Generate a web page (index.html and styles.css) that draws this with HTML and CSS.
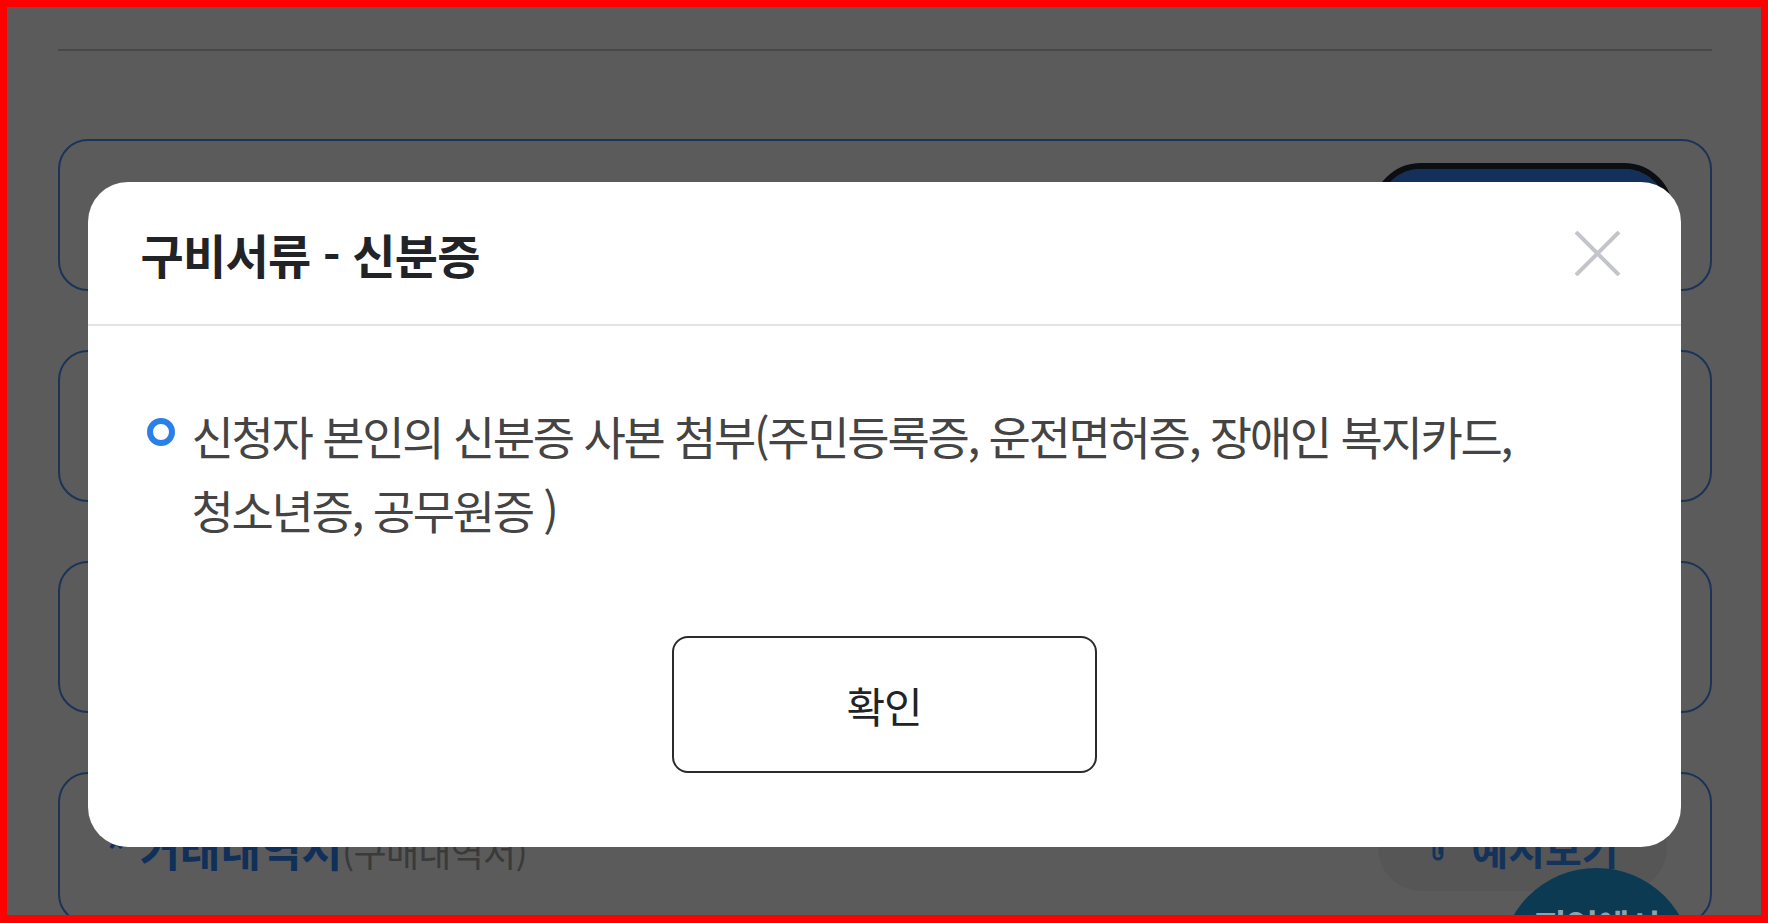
FILE: index.html
```html
<!DOCTYPE html>
<html lang="ko">
<head>
<meta charset="utf-8">
<title>구비서류 - 신분증</title>
<link rel="stylesheet" href="styles.css">
</head>
<body>
<div class="page">
  <div class="topline"></div>
  <ul class="docs">
    <li class="doc">
      <p class="doc-name"><b>* 신분증</b><span>(신분증 사본)</span></p>
      <button class="sample is-active">
        <svg class="clip" viewBox="0 0 20 32" width="20" height="32"><path d="M14 9 V23 a4 4 0 0 1 -8 0 V6 a3 3 0 0 1 6 0 V21" fill="none" stroke="currentColor" stroke-width="3" stroke-linecap="round"/></svg>
        <span>예시보기</span>
      </button>
    </li>
    <li class="doc">
      <p class="doc-name"><b>* 통장사본</b><span>(본인 명의)</span></p>
      <button class="sample">
        <svg class="clip" viewBox="0 0 20 32" width="20" height="32"><path d="M14 9 V23 a4 4 0 0 1 -8 0 V6 a3 3 0 0 1 6 0 V21" fill="none" stroke="currentColor" stroke-width="3" stroke-linecap="round"/></svg>
        <span>예시보기</span>
      </button>
    </li>
    <li class="doc">
      <p class="doc-name"><b>* 사업자등록증</b><span>(사본)</span></p>
      <button class="sample">
        <svg class="clip" viewBox="0 0 20 32" width="20" height="32"><path d="M14 9 V23 a4 4 0 0 1 -8 0 V6 a3 3 0 0 1 6 0 V21" fill="none" stroke="currentColor" stroke-width="3" stroke-linecap="round"/></svg>
        <span>예시보기</span>
      </button>
    </li>
    <li class="doc">
      <p class="doc-name"><b>* 거래내역서</b><span>(구매내역서)</span></p>
      <button class="sample">
        <svg class="clip" viewBox="0 0 20 32" width="20" height="32"><path d="M14 9 V23 a4 4 0 0 1 -8 0 V6 a3 3 0 0 1 6 0 V21" fill="none" stroke="currentColor" stroke-width="3" stroke-linecap="round"/></svg>
        <span>예시보기</span>
      </button>
    </li>
  </ul>
</div>

<div class="overlay">
  <div class="modal" role="dialog" aria-modal="true">
    <div class="modal-head">
      <h2 class="modal-title">구비서류 - 신분증</h2>
      <button class="close" aria-label="닫기">
        <svg viewBox="0 0 47 45" width="47" height="45"><path d="M2 1 L45 44 M45 1 L2 44" stroke="#c4c5ca" stroke-width="4" fill="none"/></svg>
      </button>
    </div>
    <div class="modal-body">
      <ul class="req-list">
        <li class="req"><span class="dot"></span><p>신청자 본인의 신분증 사본 첨부(주민등록증, 운전면허증, 장애인 복지카드, 청소년증, 공무원증 )</p></li>
      </ul>
      <div class="actions"><button class="ok">확인</button></div>
    </div>
  </div>
</div>

<div class="fab">지역예시</div>
<div class="frame"></div>
</body>
</html>
```

FILE: styles.css
```css
* { box-sizing: border-box; }
html, body { margin: 0; padding: 0; }
body {
  background: #ffffff;
  font-family: "Noto Sans CJK KR", "Noto Sans", sans-serif;
  width: 1768px;
  height: 923px;
  overflow: hidden;
}
.page {
  padding: 49px 56px 0 58px;
}
.topline {
  height: 2px;
  background: #c9c9c9;
}
.docs {
  list-style: none;
  margin: 88px 0 0;
  padding: 0;
  display: flex;
  flex-direction: column;
  gap: 59px;
}
.doc {
  height: 152px;
  border: 2px solid #4a8ef0;
  border-radius: 30px;
  display: flex;
  align-items: center;
  justify-content: space-between;
  padding: 0 43px 0 45px;
}
.doc-name {
  margin: 0;
  font-size: 44px;
  color: #a4a4a4;
}
.doc-name b {
  color: #2e86fa;
  font-weight: 700;
  letter-spacing: 0;
}
.doc-name span {
  font-size: 36px;
  letter-spacing: -0.02em;
}
.sample {
  width: 289px;
  height: 86px;
  border: 0;
  border-radius: 43px;
  background: #f0f0f0;
  display: flex;
  align-items: center;
  justify-content: center;
  gap: 23px;
  padding-left: 8px;
  color: #3690ff;
  font-family: inherit;
  font-size: 40px;
  font-weight: 700;
  letter-spacing: 0;
}
.sample.is-active {
  background: #3386fb;
  color: #fff;
  outline: 6px solid #1f2a38;
  height: 92px;
}
.clip { flex: none; }

.overlay {
  position: fixed;
  inset: 0;
  background: rgba(0, 0, 0, 0.643);
  display: flex;
  justify-content: center;
  align-items: flex-start;
  padding-top: 182px;
}
.modal {
  width: 1593px;
  background: #fff;
  border-radius: 40px;
}
.modal-head {
  height: 144px;
  border-bottom: 2px solid #e3e3e3;
  display: flex;
  align-items: center;
  justify-content: space-between;
  padding: 0 60px 0 53px;
}
.modal-title {
  margin: 0;
  font-size: 47px;
  font-weight: 700;
  letter-spacing: -0.015em;
  color: #222327;
}
.close {
  border: 0;
  background: none;
  padding: 0;
  width: 47px;
  height: 45px;
  display: block;
}
.close svg { display: block; }
.modal-body {
  padding: 72px 59px 74px 59px;
}
.req-list {
  list-style: none;
  margin: 0;
  padding: 0;
}
.req {
  display: flex;
  align-items: flex-start;
  gap: 17px;
}
.dot {
  flex: none;
  width: 28px;
  height: 28px;
  margin-top: 20px;
  border: 6px solid #2b7fe8;
  border-radius: 50%;
}
.req p {
  margin: 0;
  font-size: 46px;
  line-height: 74px;
  letter-spacing: -0.05em;
  color: #444444;
  word-break: keep-all;
}
.actions {
  display: flex;
  justify-content: center;
  margin-top: 90px;
}
.ok {
  width: 425px;
  height: 137px;
  border: 2px solid #2b2b2b;
  border-radius: 16px;
  background: #fff;
  font-family: inherit;
  font-size: 42px;
  color: #222327;
  letter-spacing: -0.03em;
}

.fab {
  position: fixed;
  left: 1500px;
  top: 868px;
  width: 193px;
  height: 193px;
  border-radius: 50%;
  background: #0b3a52;
  color: #8fa2ae;
  font-size: 36px;
  line-height: 1.2;
  font-weight: 700;
  text-align: center;
  padding-top: 36px;
  letter-spacing: -0.05em;
}
.frame {
  position: fixed;
  inset: 0;
  border: 7px solid #ff0000;
  border-bottom-width: 8px;
  pointer-events: none;
}
```
